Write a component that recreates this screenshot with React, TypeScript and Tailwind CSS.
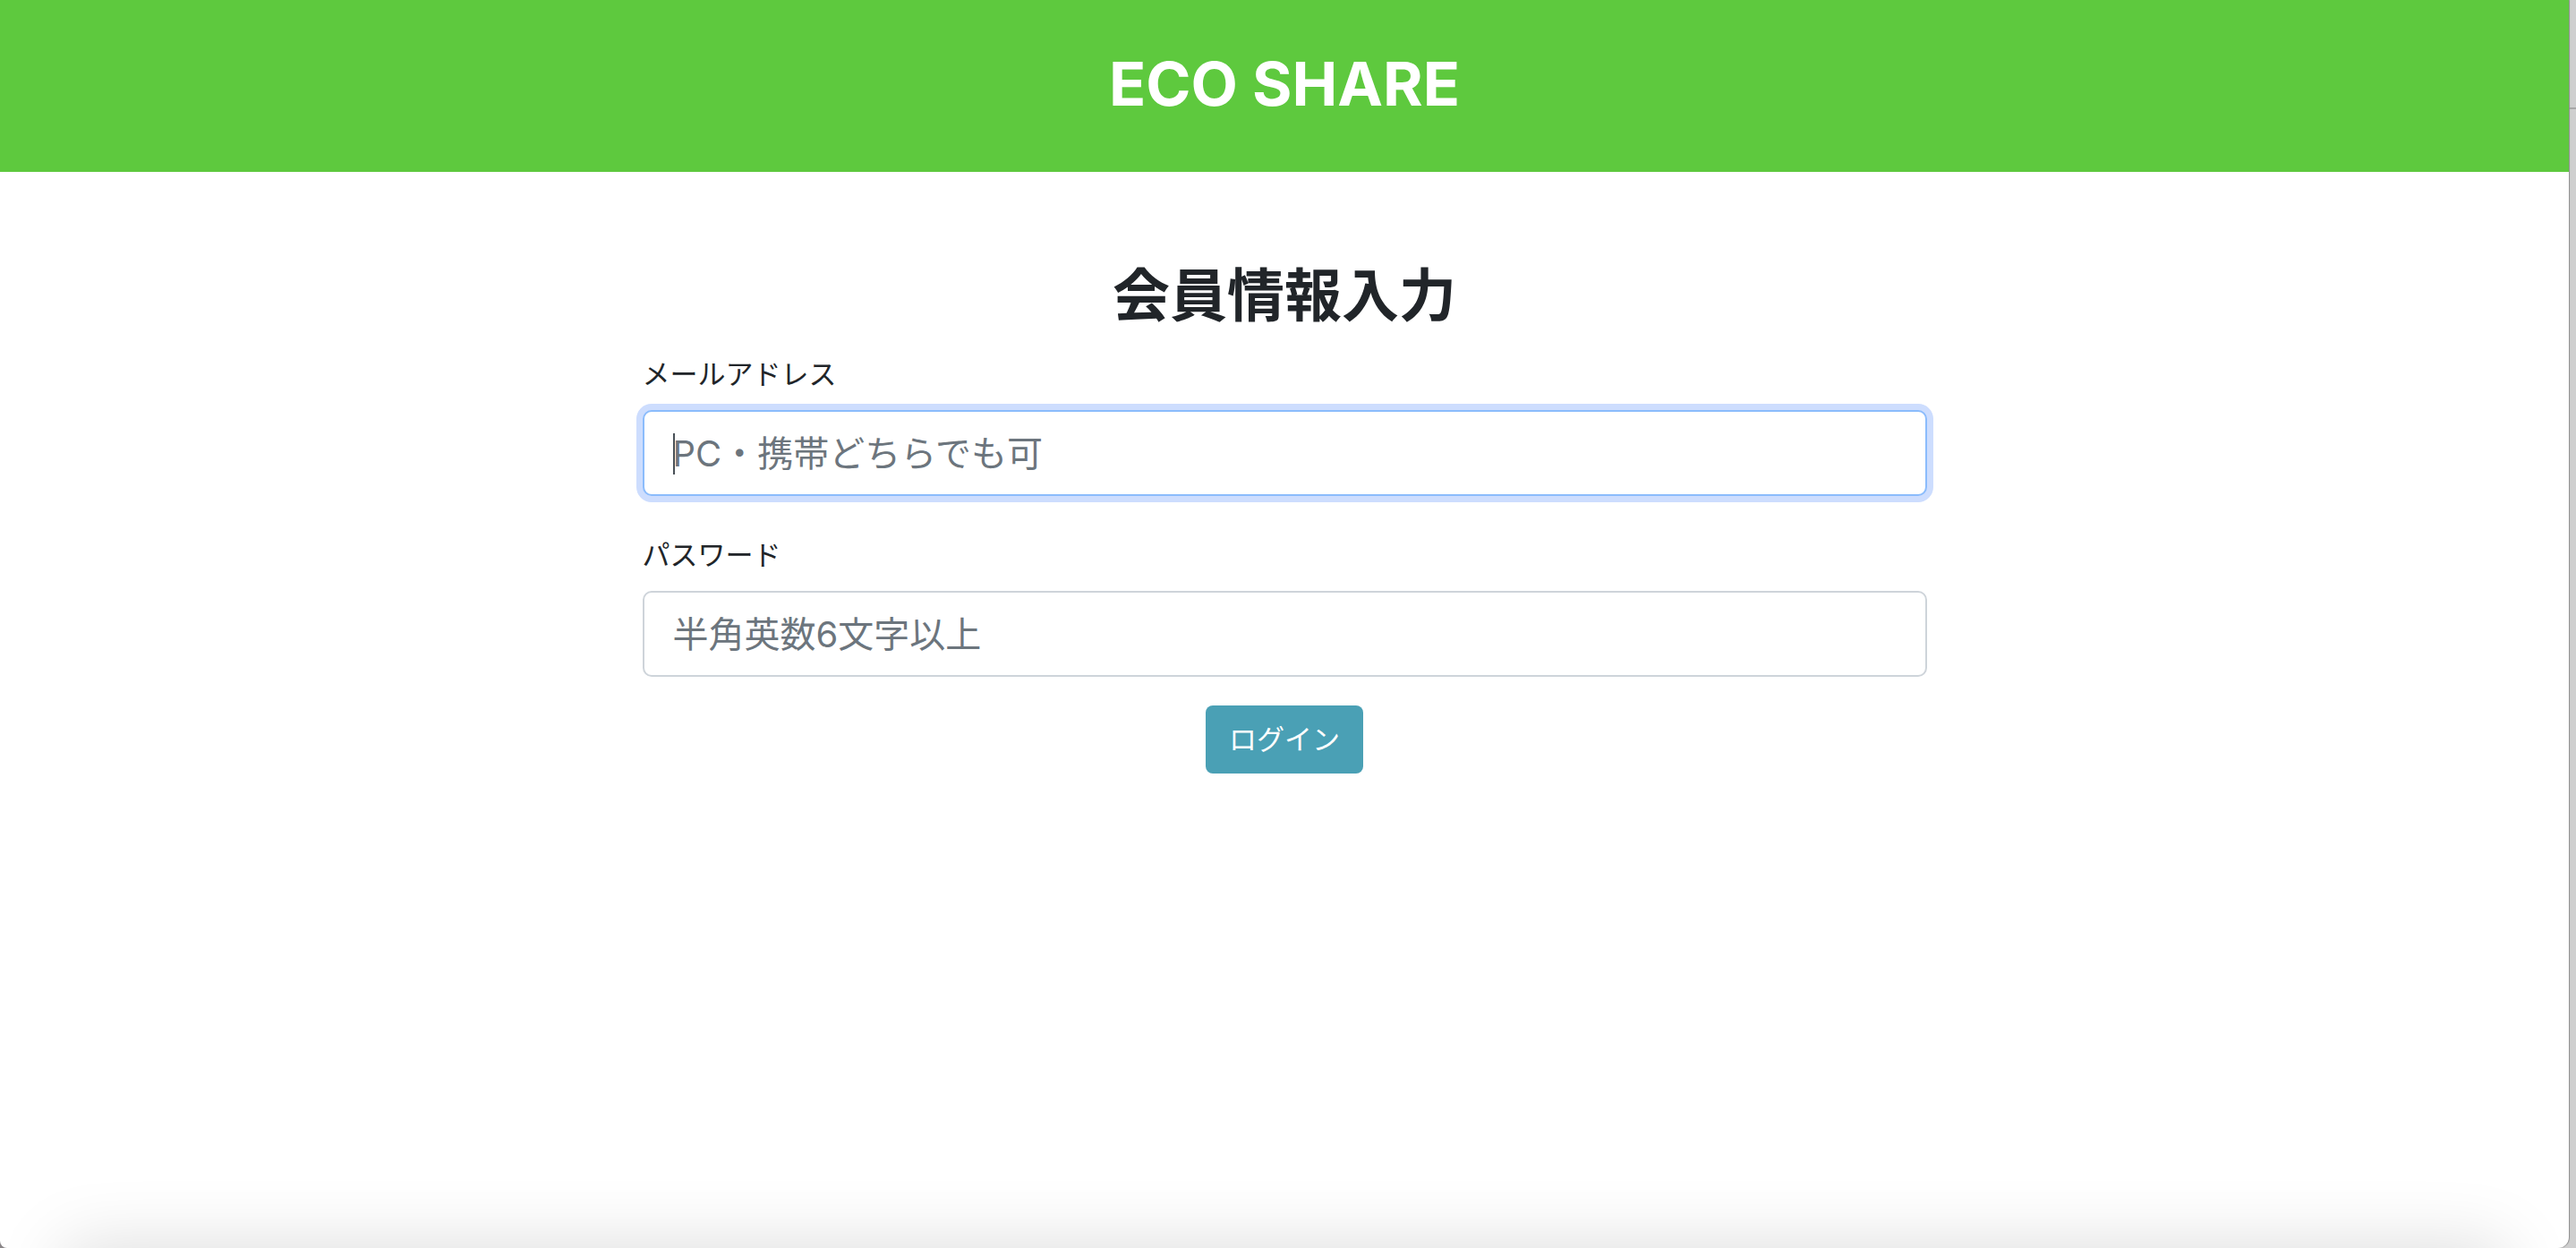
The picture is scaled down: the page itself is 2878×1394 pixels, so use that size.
import React from "react";

type FieldProps = {
  id: string;
  label: string;
  type: string;
  placeholder: string;
  active?: boolean;
};

const fieldBase =
  "block h-24 w-full rounded-[10px] border-2 bg-white px-8 text-[40px] text-[#495057] placeholder:text-[#6c757d] placeholder:opacity-100 outline-none";

function Field({ id, label, type, placeholder, active = false }: FieldProps) {
  return (
    <div>
      <label htmlFor={id} className="mb-4 block text-[31px] leading-[48px]">
        {label}
      </label>
      <div className="relative">
        <input
          id={id}
          type={type}
          placeholder={placeholder}
          autoFocus={active}
          className={
            active
              ? `${fieldBase} border-[#8bbcfc] caret-transparent shadow-[0_0_0_7px_#cdddfe]`
              : `${fieldBase} border-[#ced4da]`
          }
        />
        {active && <span aria-hidden="true" className="absolute top-[26px] left-[34px] h-[46px] w-0.5 bg-[#495057]" />}
      </div>
    </div>
  );
}

export default function App() {
  return (
    <div className="flex min-h-screen bg-[linear-gradient(to_right,#8a8688_50%,#cfcfcf_50%)] font-[Inter,'Noto_Sans_CJK_JP',sans-serif] text-[#212529]">
      <div className="relative flex-1 overflow-hidden rounded-br-[12px] rounded-bl-[8px] bg-white shadow-[1px_0_1px_#8c8c8c]">
        <header className="flex h-48 items-start justify-center bg-[#5ec93e] pt-[50px]">
          <h1 className="text-[68px] leading-[86px] font-bold text-white">ECO SHARE</h1>
        </header>

        <main className="mx-auto w-1/2 pt-[100px]">
          <h2 className="text-center text-[64px] leading-[76px] font-bold">会員情報入力</h2>
          <form className="mt-[26px]" onSubmit={(e) => e.preventDefault()}>
            <div className="flex flex-col gap-[42px]">
              <Field id="email" label="メールアドレス" type="email" placeholder="PC・携帯どちらでも可" active />
              <Field id="password" label="パスワード" type="password" placeholder="半角英数6文字以上" />
            </div>
            <div className="mt-8 flex justify-center">
              <button
                type="submit"
                className="h-[76px] rounded-lg bg-[#4aa0b5] px-[26px] text-[31px] leading-[48px] text-white"
              >
                ログイン
              </button>
            </div>
          </form>
        </main>

        <div aria-hidden="true" className="absolute inset-x-[72px] top-full h-20 shadow-[0_0_80px_rgba(0,0,0,0.15)]" />
      </div>
      <div aria-hidden="true" className="w-2 pt-[120px]">
        <div className="h-0.5 bg-[#a8a8a8]" />
      </div>
    </div>
  );
}
